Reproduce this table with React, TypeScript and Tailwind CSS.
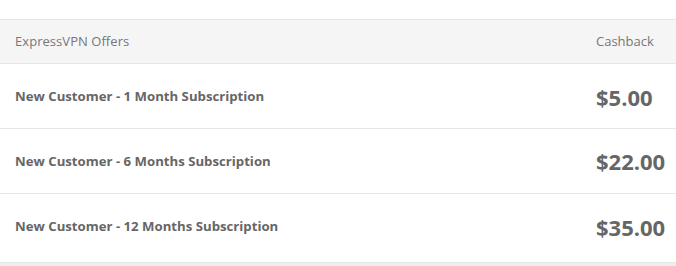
export default function App() {
  const rows = [
    { name: "New Customer - 1 Month Subscription", cash: "$5.00", h: "h-[65px] pt-[2px]" },
    { name: "New Customer - 6 Months Subscription", cash: "$22.00", h: "h-[65px] pt-[1px]" },
    { name: "New Customer - 12 Months Subscription", cash: "$35.00", h: "h-[69px] pb-[2px]" },
  ];
  return (
    <div className="w-[676px] h-[266px] bg-white font-['Open_Sans',sans-serif] overflow-hidden">
      <div className="h-[19px]" />
      <div className="flex items-center h-[45px] pt-[1px] bg-[#f5f5f5] border-y border-[#e6e6e6] text-[13px] text-[#777]">
        <div className="flex-1 pl-[15px] tracking-[0.05px]">ExpressVPN Offers</div>
        <div className="w-[80px]">Cashback</div>
      </div>
      {rows.map((r) => (
        <div key={r.cash} className={`flex items-center ${r.h} border-b border-[#e6e6e6] text-[#666]`}>
          <div className="flex-1 pl-[15px] text-[13.2px] font-bold">{r.name}</div>
          <div className="w-[80px] text-[22px] font-bold">{r.cash}</div>
        </div>
      ))}
      <div className="h-[4px] bg-[#eee]" />
    </div>
  );
}
